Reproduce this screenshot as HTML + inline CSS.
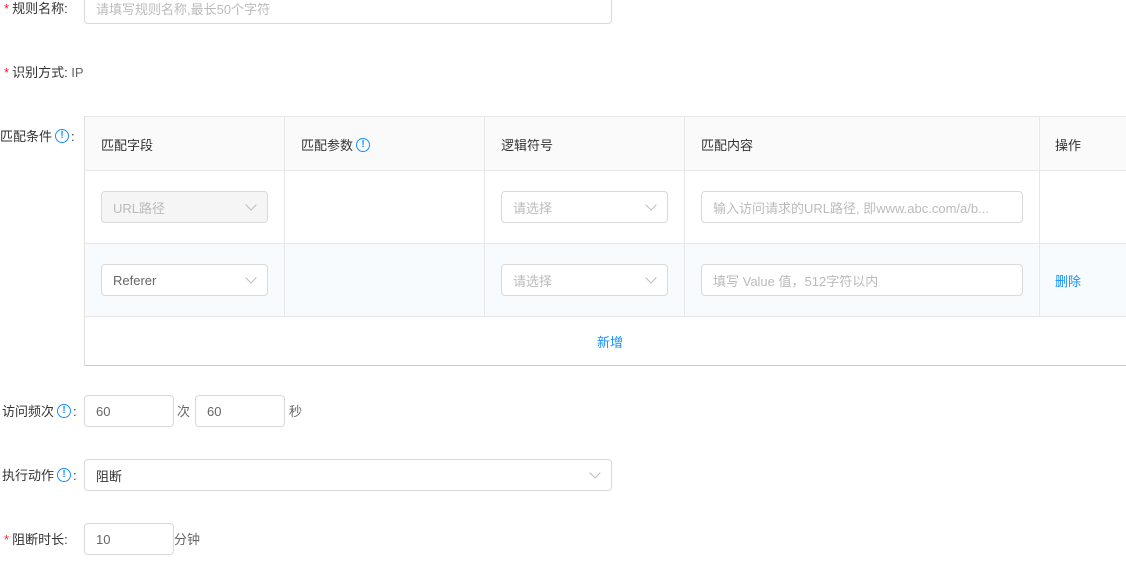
<!DOCTYPE html>
<html><head><meta charset="utf-8"><style>
*{box-sizing:border-box;margin:0;padding:0}
body{width:1126px;height:565px;overflow:hidden;background:#fff;font-family:"Liberation Sans","Noto Sans CJK SC",sans-serif;font-size:13px;color:#333;position:relative}
.a{position:absolute}
.lbl{position:absolute;font-size:13px;color:#333;white-space:nowrap}
.star{color:#f5222d;margin-right:3px}
.inp{position:absolute;border:1px solid #d9d9d9;border-radius:4px;background:#fff;font-size:13px;padding-left:11px;display:flex;align-items:center;color:#666}
.ph{color:#bbb}
.ic{display:inline-block;width:14px;height:14px;border:1px solid #1890ff;border-radius:50%;color:#1890ff;font-size:10px;line-height:12px;text-align:center;font-weight:bold;vertical-align:middle;position:relative;top:-2px;margin:0 2px 0 3px}
.arr{position:absolute;right:12px;top:9px;width:8px;height:8px;border-right:1px solid #bbb;border-bottom:1px solid #bbb;transform:rotate(45deg)}
.v{position:absolute;top:116px;width:1px;height:200px;background:#e8e8e8}
.h{position:absolute;left:84px;width:1042px;height:1px;background:#e8e8e8}
.th{position:absolute;top:135px;font-size:13px;color:#333}
</style></head><body>
<div class="lbl" style="left:4px;top:-2px"><span class="star">*</span>规则名称:</div>
<div class="inp" style="left:84px;top:-8px;width:528px;height:32px"><span class="ph">请填写规则名称,最长50个字符</span></div>
<div class="lbl" style="left:4px;top:62px"><span class="star">*</span>识别方式: <span style="color:#666">IP</span></div>
<div class="lbl" style="left:0px;top:126px">匹配条件<span class="ic">!</span>:</div>

<div class="a" style="left:84px;top:116px;width:1042px;height:54px;background:#fafafa"></div>
<div class="a" style="left:84px;top:243px;width:1042px;height:73px;background:#f7fbfd"></div>
<div class="h" style="top:116px"></div>
<div class="h" style="top:170px"></div>
<div class="h" style="top:243px"></div>
<div class="h" style="top:316px"></div>
<div class="a" style="left:84px;top:365px;width:1042px;height:1px;background:#ccc"></div>
<div class="a" style="left:84px;top:116px;width:1px;height:250px;background:#e0e0e0"></div>
<div class="v" style="left:284px"></div>
<div class="v" style="left:484px"></div>
<div class="v" style="left:684px"></div>
<div class="v" style="left:1039px"></div>
<div class="th" style="left:101px">匹配字段</div>
<div class="th" style="left:301px">匹配参数<span class="ic">!</span></div>
<div class="th" style="left:501px">逻辑符号</div>
<div class="th" style="left:701px">匹配内容</div>
<div class="th" style="left:1055px">操作</div>

<div class="inp" style="left:101px;top:191px;width:167px;height:32px;background:#f5f5f5"><span class="ph">URL路径</span><i class="arr"></i></div>
<div class="inp" style="left:501px;top:191px;width:167px;height:32px"><span class="ph">请选择</span><i class="arr"></i></div>
<div class="inp" style="left:701px;top:191px;width:322px;height:32px"><span class="ph">输入访问请求的URL路径, 即www.abc.com/a/b...</span></div>

<div class="inp" style="left:101px;top:264px;width:167px;height:32px"><span>Referer</span><i class="arr"></i></div>
<div class="inp" style="left:501px;top:264px;width:167px;height:32px"><span class="ph">请选择</span><i class="arr"></i></div>
<div class="inp" style="left:701px;top:264px;width:322px;height:32px"><span class="ph">填写 Value 值，512字符以内</span></div>
<div class="lbl" style="left:1055px;top:271px;color:#1890ff">删除</div>
<div class="lbl" style="left:597px;top:332px;color:#1890ff">新增</div>

<div class="lbl" style="left:2px;top:401px">访问频次<span class="ic">!</span>:</div>
<div class="inp" style="left:84px;top:395px;width:90px;height:32px">60</div>
<div class="lbl" style="left:177px;top:401px;color:#666">次</div>
<div class="inp" style="left:195px;top:395px;width:90px;height:32px">60</div>
<div class="lbl" style="left:289px;top:401px;color:#666">秒</div>

<div class="lbl" style="left:2px;top:465px">执行动作<span class="ic">!</span>:</div>
<div class="inp" style="left:84px;top:459px;width:528px;height:32px;color:#333">阻断<i class="arr"></i></div>

<div class="lbl" style="left:4px;top:529px"><span class="star">*</span>阻断时长:</div>
<div class="inp" style="left:84px;top:523px;width:90px;height:32px">10</div>
<div class="lbl" style="left:174px;top:529px;color:#666">分钟</div>
</body></html>
